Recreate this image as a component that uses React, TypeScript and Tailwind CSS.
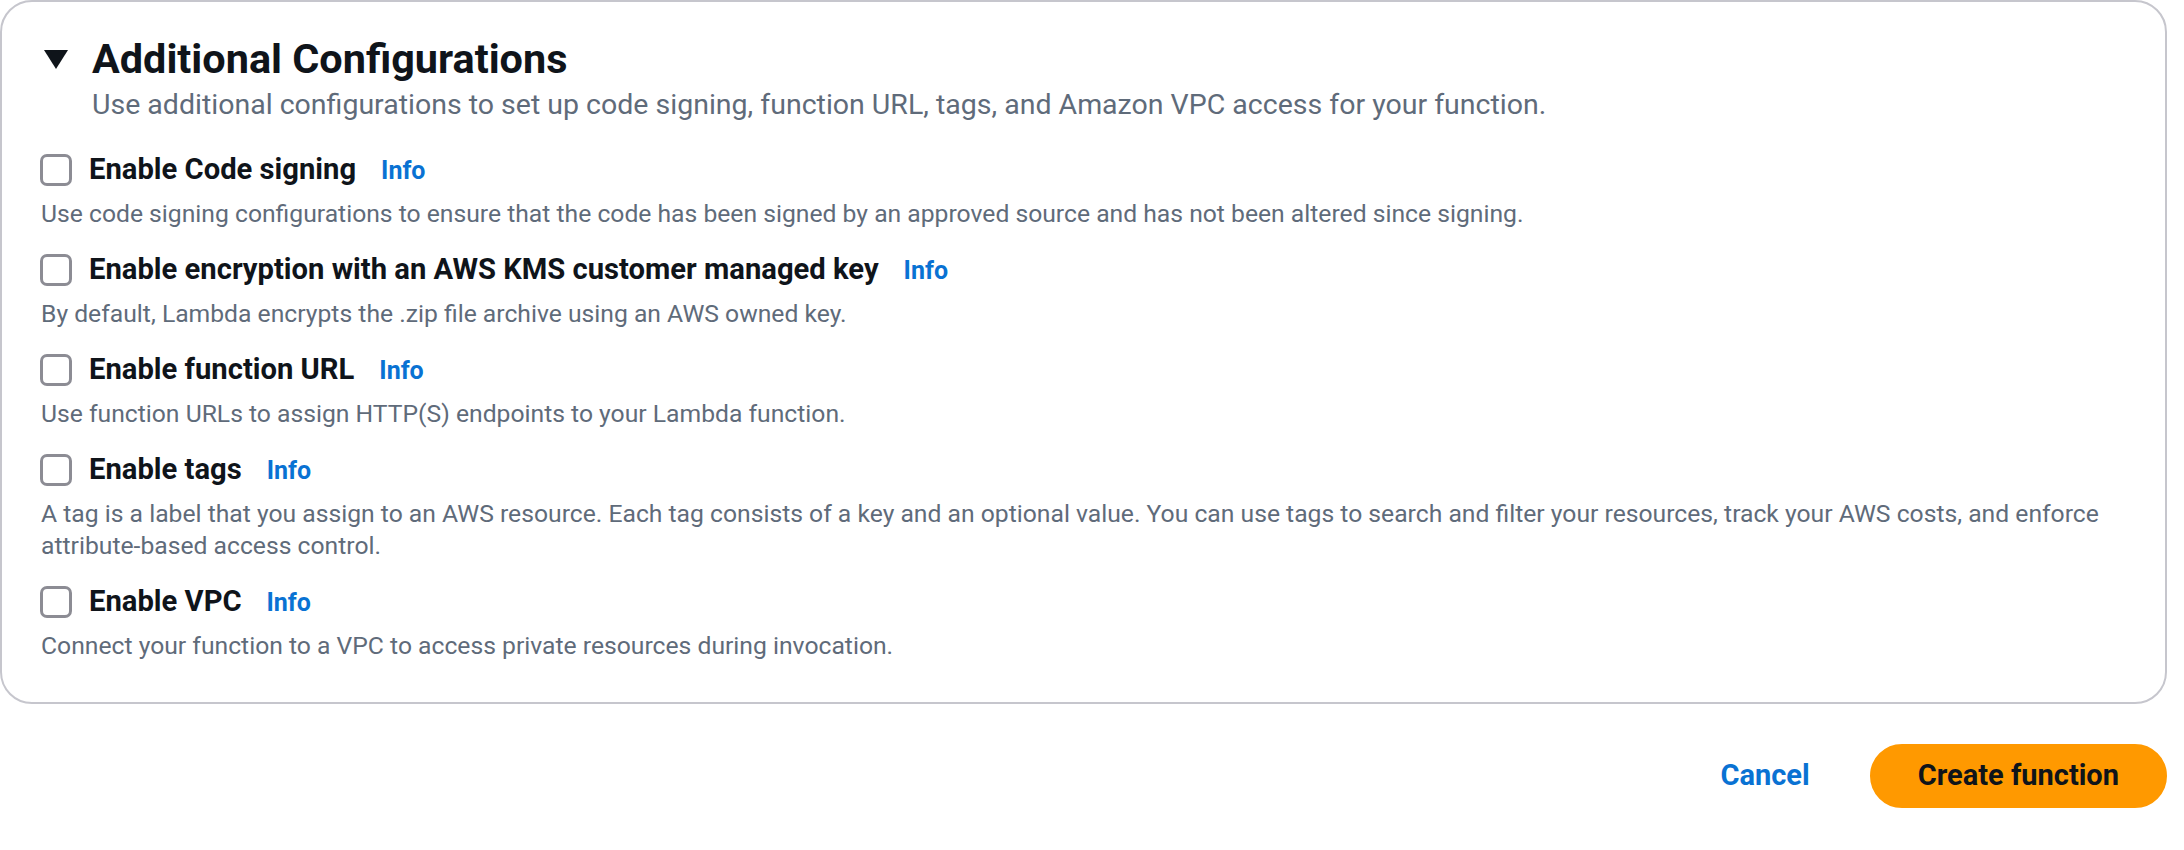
import React from "react";

const rows = [
  {
    label: "Enable Code signing",
    desc: "Use code signing configurations to ensure that the code has been signed by an approved source and has not been altered since signing.",
  },
  {
    label: "Enable encryption with an AWS KMS customer managed key",
    desc: "By default, Lambda encrypts the .zip file archive using an AWS owned key.",
  },
  {
    label: "Enable function URL",
    desc: "Use function URLs to assign HTTP(S) endpoints to your Lambda function.",
  },
  {
    label: "Enable tags",
    desc: "A tag is a label that you assign to an AWS resource. Each tag consists of a key and an optional value. You can use tags to search and filter your resources, track your AWS costs, and enforce attribute-based access control.",
  },
  {
    label: "Enable VPC",
    desc: "Connect your function to a VPC to access private resources during invocation.",
  },
];

export default function App() {
  return (
    <div className="min-h-screen bg-white pr-[17px] font-['Roboto',sans-serif] antialiased">
      <div className="border-2 border-[#c6c6cd] rounded-[32px] pt-[33px] pb-[40px] pl-[38px] pr-[40px]">
        <div className="flex items-center h-[48px] pl-[4px]">
          <svg width="24" height="19" viewBox="0 0 24 19" className="shrink-0">
            <path d="M0 0 H24 L12 19 Z" fill="#0f141a" />
          </svg>
          <h2 className="ml-[24px] text-[41.4px] leading-[48px] font-bold text-[#0f141a]">
            Additional Configurations
          </h2>
        </div>
        <p className="mt-[2px] pl-[52px] text-[28.5px] leading-[40px] text-[#5f6b7a]">
          Use additional configurations to set up code signing, function URL, tags, and Amazon VPC access for your function.
        </p>
        <div className="mt-[25px] flex flex-col gap-[20px]">
          {rows.map((r) => (
            <div key={r.label} className="flex flex-col">
              <div className="flex items-center h-[40px]">
                <span className="w-[32px] h-[32px] border-[3px] border-[#8c8c94] rounded-[7px] bg-white shrink-0" />
                <span className="ml-[17px] flex items-baseline">
                  <span className="text-[29.2px] leading-[40px] font-bold text-[#0f141a]">{r.label}</span>
                  <a className="ml-[25px] text-[25px] leading-[40px] font-bold text-[#0972d3] cursor-pointer">Info</a>
                </span>
              </div>
              <p className="mt-[8px] pl-[1px] text-[24.7px] leading-[32px] text-[#5f6b7a]">{r.desc}</p>
            </div>
          ))}
        </div>
      </div>
      <div className="flex justify-end items-center gap-[16px] mt-[40px]">
        <button className="h-[64px] px-[44px] rounded-full text-[29px] font-bold text-[#0972d3]">
          Cancel
        </button>
        <button className="h-[64px] px-[46px] rounded-full bg-[#ff9900] border-2 border-[#ff9900] text-[29px] font-bold text-[#0f141a]">
          Create function
        </button>
      </div>
    </div>
  );
}
